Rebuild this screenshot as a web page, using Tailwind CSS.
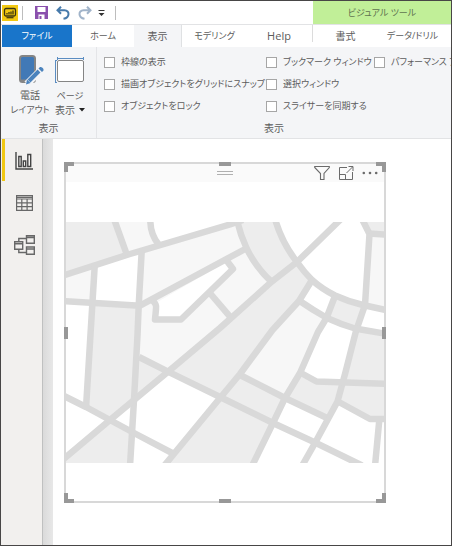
<!DOCTYPE html>
<html lang="ja">
<head>
<meta charset="utf-8">
<meta name="viewport" content="width=device-width, initial-scale=1">
<title>Power BI Desktop</title>
<script src="https://cdn.jsdelivr.net/npm/@tailwindcss/browser@4"></script>
</head>
<body class="bg-white font-['Open_Sans','Noto_Sans_CJK_JP',sans-serif] [font-feature-settings:'palt'] text-[10px] leading-3 text-[#5c5c5c]">
<div class="flex min-h-screen flex-col overflow-hidden border border-[#484646]">
  <header class="flex h-[23px] shrink-0 items-stretch">
    <div class="flex flex-1 items-center pl-px">
      <svg class="h-4 w-4" viewBox="0 0 16 16" aria-hidden="true"><path fill="#f2c811" d="M0 0h16v16H0z"/><rect x="2.5" y="3.5" width="11" height="7.5" rx="1.5" fill="none" stroke="#3b3410" stroke-width="1.3"/><path d="M5 9.5V8M7 9.500V7M9 9.500V6.500M11 9.500V5.500" stroke="#3b3410" stroke-width="1.300"/><path d="M4.500 12.700h7" stroke="#3b3410" stroke-width="1.200"/></svg>
      <span class="ml-1 h-3.5 w-px bg-[#bdbdbd]"></span>
      <button aria-label="保存" class="ml-3"><svg class="h-[13px] w-[13px]" viewBox="0 0 13 13"><path fill="#8a50ad" d="M0 0h13v13H0z"/><path fill="#fff" d="M2.500 1h8v5h-8zM3.500 8.500h6V13h-6z"/><path fill="#8a50ad" d="M4.500 10h2v3h-2z"/></svg></button>
      <button aria-label="元に戻す" class="ml-2"><svg class="h-3.5 w-3.5" viewBox="0 0 14 14" fill="none" stroke="#477aab" stroke-width="2"><path d="M5 .8 1.500 4.300 5 7.800M2 4.300h6.500c5.500 0 5.500 7.500-1 8.500"/></svg></button>
      <button aria-label="やり直し" class="ml-2"><svg class="h-3.5 w-3.5" viewBox="0 0 14 14" fill="none" stroke="#a0b3c9" stroke-width="2"><path d="M9 .8l3.500 3.500L9 7.800M12 4.300H5.500c-5.500 0-5.500 7.500 1 8.500"/></svg></button>
      <button aria-label="クイック アクセスのカスタマイズ" class="ml-1.5"><svg class="h-2 w-[7px]" viewBox="0 0 7 8"><path fill="#333" d="M.500 1h6v1h-6zM.500 4h6l-3 3z"/></svg></button>
      <span class="ml-2.5 h-3.5 w-px bg-[#bdbdbd]"></span>
    </div>
    <div class="flex w-[138px] items-center justify-center bg-[#c1ef98] text-[9px] text-[#5f7350]">ビジュアル ツール</div>
  </header>
  <nav class="flex h-[23px] shrink-0 items-stretch border-t border-[#e2e3e5]">
    <button class="ml-px w-[70px] bg-[#1975ca] pb-px text-[9px] text-white">ファイル</button>
    <button class="w-[62px] pb-px text-[9px]">ホーム</button>
    <button class="w-12 border-r border-[#dfe1e3] bg-[#f4f5f7] pb-px">表示</button>
    <button class="w-[65px] pb-px text-[9px]">モデリング</button>
    <button class="w-16 pb-px text-[11px]">Help</button>
    <span class="ml-px h-[17px] w-px bg-[#dcdcdc]"></span>
    <button class="w-[65px] pb-px">書式</button>
    <button class="flex-1 pr-1 pb-px text-[9px]">データ/ドリル</button>
  </nav>
  <section class="flex h-[92px] shrink-0 border-b border-[#e2e3e5] bg-[#f4f5f7]" aria-label="リボン">
    <div class="flex w-24 shrink-0 flex-col items-center justify-between border-r border-[#e4e5e8] pt-2 pb-1">
      <div class="flex w-full items-start pl-[9px]">
        <button class="flex w-10 flex-col items-center whitespace-nowrap">
          <svg class="h-[31px] w-7" viewBox="0 0 28 31" fill="none"><rect x="4" y="1" width="15" height="26" rx="2.500" fill="#4179b6" stroke="#858585" stroke-width="2"/><path stroke="#858585" stroke-width="2" d="M5 25.500h13"/><path stroke="#f4f5f7" stroke-width="7" d="m11 29 14-14"/><path stroke="#4b83bd" stroke-width="4" d="m13 26 10-10"/><path fill="#4b83bd" d="m22.500 13.500 1.500-1.500c2 0 4 1.500 3.500 3.500L26 17zM11 24.500l3.500 3.500-4.500 1.500z"/></svg>
          <span class="mt-0.5 leading-[14px]">電話<br><span class="text-[9px]">レイアウト</span></span>
        </button>
        <button class="flex w-10 flex-col items-center whitespace-nowrap">
          <svg class="h-[31px] w-[30px]" viewBox="0 0 30 31" fill="none"><rect x="2.500" y="5.500" width="26" height="21" rx="1.500" fill="#fff" stroke="#858585"/><path stroke="#5b8dc2" d="M2 3.500h27M.500 5v23M2.500 2v3M28.500 2v3M-1 5.500h3M-1 27.500h3"/></svg>
          <span class="mt-0.5 leading-[14px]"><span class="text-[9px]">ページ</span><br><span class="flex items-center gap-1">表示<svg class="h-1 w-1.5" viewBox="0 0 6 4"><path fill="#222" d="M0 0h6L3 3.500z"/></svg></span></span>
        </button>
      </div>
      <h2>表示</h2>
    </div>
    <div class="flex min-w-0 flex-1 flex-col justify-between overflow-hidden pb-1">
      <div class="grid shrink-0 grid-cols-[162px_108px_max-content] pt-1 pl-[7px] text-[9px] leading-[22px] whitespace-nowrap">
        <label class="flex items-center gap-1.5"><input type="checkbox" class="h-[11px] w-[11px] shrink-0 appearance-none border border-[#a6a6a6] bg-white">枠線の表示</label>
        <label class="flex items-center gap-1.5"><input type="checkbox" class="h-[11px] w-[11px] shrink-0 appearance-none border border-[#a6a6a6] bg-white">ブックマーク ウィンドウ</label>
        <label class="flex items-center gap-1.5"><input type="checkbox" class="h-[11px] w-[11px] shrink-0 appearance-none border border-[#a6a6a6] bg-white">パフォーマンス ア</label>
        <label class="flex items-center gap-1.5"><input type="checkbox" class="h-[11px] w-[11px] shrink-0 appearance-none border border-[#a6a6a6] bg-white">描画オブジェクトをグリッドにスナップ</label>
        <label class="col-span-2 flex items-center gap-1.5"><input type="checkbox" class="h-[11px] w-[11px] shrink-0 appearance-none border border-[#a6a6a6] bg-white">選択ウィンドウ</label>
        <label class="flex items-center gap-1.5"><input type="checkbox" class="h-[11px] w-[11px] shrink-0 appearance-none border border-[#a6a6a6] bg-white">オブジェクトをロック</label>
        <label class="col-span-2 flex items-center gap-1.5"><input type="checkbox" class="h-[11px] w-[11px] shrink-0 appearance-none border border-[#a6a6a6] bg-white">スライサーを同期する</label>
      </div>
      <h2 class="text-center">表示</h2>
    </div>
  </section>
  <div class="flex flex-1">
    <nav class="flex w-[42px] shrink-0 flex-col border-r border-[#bfc0c0] bg-[#f2f0ee] pl-px" aria-label="ビュー">
      <button aria-label="レポート" class="flex h-[42px] items-center border-l-3 border-[#f2c811] pt-0.5 pl-[10px]"><svg class="h-[18px] w-[18px]" viewBox="0 0 18 18" fill="none" stroke="#444" stroke-width="1.400"><path d="M1 0v17h17M3.800 4.500h2.400v10H3.800zM8.300 9h2.400v5.500H8.300zM12.800 2.500h2.900v12h-2.900z"/></svg></button>
      <button aria-label="データ" class="flex h-[42px] items-center justify-center pt-0.5 pl-1"><svg class="h-4 w-[17px]" viewBox="0 0 17 16" fill="none" stroke="#686868" stroke-width="1.200"><path d="M.600.600h15.800v14.800H.600zM.600 4h15.800M.600 7.800h15.800M.600 11.600h15.800M5.800 4v11.400M11.100 4v11.400M.600 2.300h15.800"/></svg></button>
      <button aria-label="モデル" class="flex h-[42px] items-center justify-center pt-0.5 pl-1"><svg class="h-5 w-[21px]" viewBox="0 0 21 20" fill="none" stroke="#686868" stroke-width="1.400"><path d="M12.500.700h7.800v7.600h-7.800zM12.500 2.500h7.800M.700 6.700h8v7.600h-8zM.700 8.700h8M12.500 12h7.800v7.300h-7.800zM12.500 14h7.800M4.800 6.500V3.500h7.500M4.800 14.500v3h7.500"/></svg></button>
    </nav>
    <div class="w-2.5 shrink-0 bg-linear-to-r from-[#dadada] to-[#e8e8e8]"></div>
    <main class="flex-1 pt-[23px] pr-[65px] pl-[11px]">
      <div class="relative border-2 border-[#d8d8d8] text-[#989898]">
        <div class="grid h-[18px] grid-cols-3 items-center bg-[#fafafa]">
          <span></span>
          <span class="h-1 w-4 justify-self-center border-y border-[#b0b0b0]"></span>
          <div class="flex items-center justify-end gap-2 pr-1.5 text-[#6b6b6b]">
            <button aria-label="フィルター"><svg class="h-4 w-4" viewBox="0 0 16 16" fill="none" stroke="currentColor" stroke-width="1.100"><path d="M.700 1.500h14.600v1L10 8.500v6H6.500v-6L.700 2.500z"/></svg></button>
            <button aria-label="フォーカス モード"><svg class="h-4 w-4" viewBox="0 0 16 16" fill="none" stroke="currentColor"><path d="M9 2.500H1.500v12h13V7M1.500 9.500h6v5M8.500 8l6-6M10.500 1.500h4.500V6"/></svg></button>
            <button aria-label="その他のオプション"><svg class="h-4 w-4" viewBox="0 0 16 16" fill="currentColor"><circle cx="1.800" cy="8" r="1.300"/><circle cx="8" cy="8" r="1.300"/><circle cx="14.200" cy="8" r="1.300"/></svg></button>
          </div>
        </div>
        <svg class="mt-10 mb-[38px] block w-full" viewBox="66 222 318 241" role="img" aria-label="地図">
          <path fill="#fff" d="M60 222h330v241H60z"/>
          <g fill="#ededed">
            <path d="M60 222h55l12 33-62 20h-5z"/>
            <path d="M94 303l45 3-5 94-24 20-24-12z"/>
            <path d="M65 458l45-38 24 13-4 30H65z"/>
            <path d="M138 357l30 15-34 28z"/>
            <path d="M168 372l129-110 15 18-13 21-26 29-53 68z"/>
            <path d="M238 222h37q7 22 22 40l-25 20q-20-20-26-35z"/>
            <path d="M220 398l20-23 45 23-12 25-20 40h-87z"/>
            <path d="M335 295l28 10-8 23-28-10z"/>
            <path d="M363 222h22v12h-16z"/>
            <path d="M355 328l30 6v50l-40-2z"/>
            <path d="M301 373l16 9 26 1-7 18-10 16-41-19z"/>
            <path d="M344 382l41 2v35h-15l-33-18z"/>
          </g>
          <g fill="#f7f7f7">
            <path d="M115 222h35q1 13 8 22l-31 11z"/>
            <path d="M65 275l30-9-2 37-28-2z"/>
            <path d="M142 252l96-30 8 27q5 13 26 33L168 372l-30-15 2-51z"/>
            <path d="M299 301l28 17-27 55-15 25-45-23 33-42z"/>
            <path d="M369 234h16v76l-20-5z"/>
          </g>
          <path fill="#fff" d="M154 304l72-42 6 7-51 50h-26z"/>
          <g fill="none" stroke="#d9d9d9" stroke-width="6.500" stroke-linejoin="round">
            <path d="M60 276.500 65 275 130 254 230 224.500 243 220"/>
            <path d="M114 219l13 36M150.300 220q0 14 8 24"/>
            <path d="M60 301l80 4.700 107-57.700"/>
            <path d="M94.700 266l-4 65L86 408M141.700 251l-3 54.700L137.500 335 134 400 130 466"/>
            <path d="M152 300q5 4 4 9l-1 10.500h26l52-50.500-6-8"/>
            <path d="M209 292l21 24.700"/>
            <path d="M341 219l-44 43-25.300 19.700L220 328 168 371.700 110 420 60 462"/>
            <path d="M237 220q3 14 9.500 28 9 19 25.200 34"/>
            <path d="M275 219q7 24 22 43 7 10 15 18 10 9 23 15.500 13 6 28 9.500l27 6"/>
            <path d="M362 219l7.500 15-4.500 71-9 26-11 43-7.500 27.500L315 443l-13 23"/>
            <path d="M369 233.500l21 1.500"/>
            <path d="M299 300.500q13 9 28 17.500 13 6 28 10.500l35 6"/>
            <path d="M312 280l-13 21-26.500 29L240 374 220 398 173 455l-9 11"/>
            <path d="M335 296l-8.500 22-8.500 14-18 41-15 25-12 25-21 43"/>
            <path d="M301 373l15.500 8.500L390 384"/>
            <path d="M139 357l29 14.700L220 397l53 26 42 19.500 47 23"/>
            <path d="M240 375l45 23 41 19.500"/>
            <path d="M337 401l33 18h20M379.300 420l-4.300 46"/>
            <path d="M60 394l26 13 24 13 24 13 40 21"/>
          </g>
        </svg>
        <span class="absolute -top-0.5 -left-0.5 h-2.5 w-2.5 border-t-4 border-l-4 border-current"></span>
        <span class="absolute -top-0.5 -right-0.5 h-2.5 w-2.5 border-t-4 border-r-4 border-current"></span>
        <span class="absolute -bottom-0.5 -left-0.5 h-2.5 w-2.5 border-b-4 border-l-4 border-current"></span>
        <span class="absolute -right-0.5 -bottom-0.5 h-2.5 w-2.5 border-r-4 border-b-4 border-current"></span>
        <span class="absolute -top-0.5 left-1/2 h-1 w-3 -translate-x-1/2 bg-current"></span>
        <span class="absolute -bottom-0.5 left-1/2 h-1 w-3 -translate-x-1/2 bg-current"></span>
        <span class="absolute top-1/2 -left-0.5 h-3 w-1 -translate-y-1/2 bg-current"></span>
        <span class="absolute top-1/2 -right-0.5 h-3 w-1 -translate-y-1/2 bg-current"></span>
      </div>
    </main>
  </div>
</div>
</body>
</html>
